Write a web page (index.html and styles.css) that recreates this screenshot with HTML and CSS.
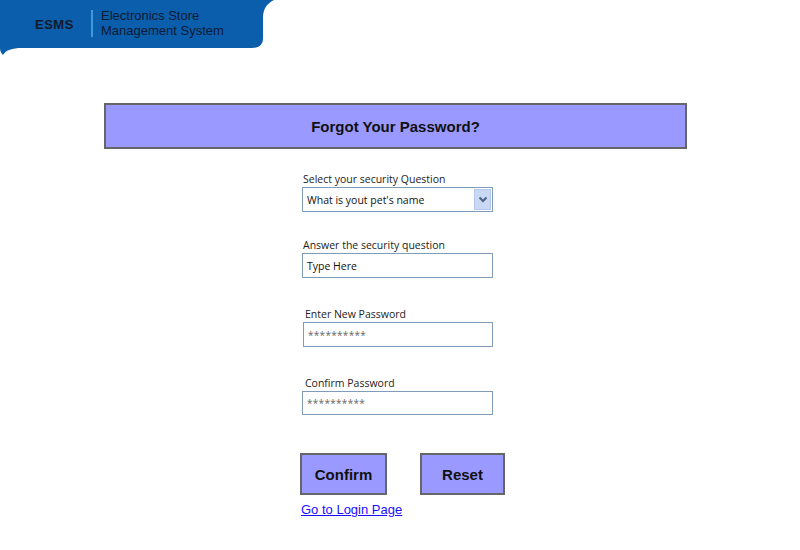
FILE: index.html
```html
<!DOCTYPE html>
<html>
<head>
<meta charset="utf-8">
<link rel="stylesheet" href="styles.css">
</head>
<body>
<header class="brand">
  <svg class="brand-bg" width="280" height="56" viewBox="0 0 280 56">
    <path d="M0 0 H274 C266 4 263 10 263 18 V38 C263 45 259 48 252 48 H22 C12 48 6 50 3 55 C1 53 0 51 0 48 Z" fill="#0b5eab"/>
  </svg>
  <div class="brand-content">
    <span class="brand-short">ESMS</span>
    <span class="brand-divider"></span>
    <span class="brand-name">Electronics Store<br>Management System</span>
  </div>
</header>

<main>
  <h1 class="title-bar">Forgot Your Password?</h1>

  <form class="form">
    <div class="field first">
      <label class="label">Select your security Question</label>
      <div class="box select">
        <span>What is yout pet's name</span>
        <span class="arrow">
          <svg width="10" height="7" viewBox="0 0 10 7"><path d="M1.5 1.5 L5 5 L8.5 1.5" fill="none" stroke="#4d6185" stroke-width="2"/></svg>
        </span>
      </div>
    </div>

    <div class="field f2">
      <label class="label">Answer the security question</label>
      <div class="box">Type Here</div>
    </div>

    <div class="field f3 shifted">
      <label class="label">Enter New Password</label>
      <div class="box pw">**********</div>
    </div>

    <div class="field f4">
      <label class="label lab-shift">Confirm Password</label>
      <div class="box pw short">**********</div>
    </div>

    <div class="buttons">
      <button type="button" class="btn btn-confirm">Confirm</button>
      <button type="button" class="btn btn-reset">Reset</button>
    </div>
    <a class="login-link" href="#">Go to Login Page</a>
  </form>
</main>
</body>
</html>
```

FILE: styles.css
```css
* { box-sizing: border-box; }
html, body { margin: 0; padding: 0; background: #fff; }
body { font-family: "Liberation Sans", Arial, sans-serif; width: 800px; height: 550px; overflow: hidden; }

.brand { position: relative; width: 280px; height: 56px; }
.brand-bg { position: absolute; left: 0; top: 0; }
.brand-content {
  position: relative;
  display: flex;
  align-items: center;
  height: 48px;
  padding-left: 35px;
}
.brand-short { font-weight: bold; font-size: 13px; color: #14192a; letter-spacing: 0.5px; width: 56px; }
.brand-divider { width: 2px; height: 27px; background: #3e9ad8; margin-top: -2px; }
.brand-name { font-size: 13px; color: #0d1a35; line-height: 15px; margin-left: 8px; margin-top: -3px; }

main { padding-top: 47px; }
.title-bar {
  margin: 0 0 0 104px;
  width: 583px;
  height: 46px;
  border: 2px solid #666;
  background: #9999ff;
  font-size: 15px;
  font-weight: bold;
  color: #111;
  display: flex;
  align-items: center;
  justify-content: center;
}

.form { padding-left: 302px; font-family: "Open Sans", "Noto Sans", sans-serif; }
.field { width: 191px; }
.first { margin-top: 23px; }
.f2 { margin-top: 26px; }
.f3 { margin-top: 29px; }
.f4 { margin-top: 29px; }
.label { display: block; font-size: 10.5px; line-height: 14px; height: 14px; color: #222; margin-left: 1px; margin-bottom: 1px; }
.shifted { margin-left: 1px; width: 190px; }
.shifted .label { margin-left: 2px; }
.lab-shift { margin-left: 3px; }
.box {
  height: 25px;
  border: 1px solid #7f9db9;
  font-size: 10.5px;
  color: #111;
  padding-left: 4px;
  display: flex;
  align-items: center;
  background: #fff;
}
.box.short { height: 24px; }
.select { justify-content: space-between; padding-right: 1px; }
.arrow {
  width: 17px;
  height: 21px;
  background: #c9d8f5;
  border: 1px solid #b6c8ea;
  display: flex;
  align-items: center;
  justify-content: center;
}
.pw { color: #666; font-size: 10px; letter-spacing: 0.3px; padding-left: 4px; }

.buttons { display: flex; gap: 33px; margin-top: 38px; margin-left: -2px; }
.btn {
  height: 42px;
  border: 2px solid #666;
  background: #9999ff;
  font-family: "Liberation Sans", Arial, sans-serif;
  font-weight: bold;
  font-size: 15px;
  color: #111;
  padding: 0;
  margin: 0;
}
.btn-confirm { width: 87px; }
.btn-reset { width: 85px; }
.login-link {
  display: inline-block;
  margin-top: 7px;
  margin-left: -1px;
  font-family: "Liberation Sans", Arial, sans-serif;
  font-size: 13px;
  color: #1a0dff;
  text-decoration: underline;
}
```
